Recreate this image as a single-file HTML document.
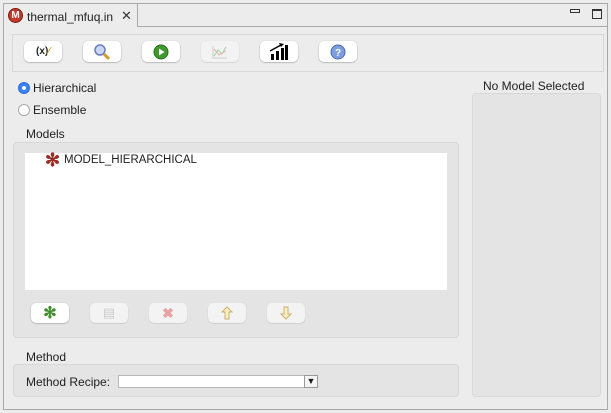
<!DOCTYPE html>
<html><head><meta charset="utf-8">
<style>
*{box-sizing:border-box;margin:0;padding:0}
body{width:611px;height:413px;background:#ececec;font-family:"Liberation Sans",sans-serif;font-size:12px;color:#1e1e1e;position:relative;overflow:hidden}
.a{position:absolute}
.btn{position:absolute;background:#fff;border-radius:5px;box-shadow:0 0.5px 1.5px rgba(0,0,0,.35);display:flex;align-items:center;justify-content:center}
.btn.dis{background:#f3f3f3;box-shadow:0 0.5px 1px rgba(0,0,0,.18)}
</style></head><body>
<div class="a" style="left:3px;top:3px;width:605px;height:407px;border:1px solid #a9a9a9;border-top:none"></div>
<div class="a" style="left:3px;top:3px;width:605px;height:1px;background:#a9a9a9"></div>
<div class="a" style="left:138px;top:26px;width:470px;height:1px;background:#a9a9a9"></div>
<div class="a" style="left:4px;top:4px;width:134px;height:23px;background:#ececec;border-right:1px solid #a9a9a9"></div>
<div class="a" style="left:8px;top:8px;width:15px;height:15px;border-radius:50%;background:#c0392b;border:1px solid #7a1d14;color:#fff;font-weight:bold;font-size:10px;line-height:13px;text-align:center">M</div>
<div class="a" style="left:27px;top:10px;font-size:12px">thermal_mfuq.in</div>
<div class="a" style="left:121px;top:8px;font-size:13px;color:#333">✕</div>
<div class="a" style="left:570px;top:9px;width:10px;height:4px;border:1px solid #333"></div>
<div class="a" style="left:592px;top:9px;width:10px;height:10px;border:1px solid #333;border-top-width:2px"></div>
<div class="a" style="left:12px;top:34px;width:592px;height:38px;border:1px solid #d8d8d8;background:#ececec"></div>
<div class="btn" style="left:24px;top:41px;width:38px;height:21px;font-size:10px;font-weight:bold">(x)<span style="color:#d9a520">⁄</span></div>
<div class="btn" style="left:83px;top:41px;width:38px;height:21px"><svg width="18" height="18"><circle cx="7" cy="7" r="5" fill="#c9d6f5" stroke="#6a7fb8" stroke-width="1.5"/><line x1="11" y1="11" x2="16" y2="16" stroke="#d69a2a" stroke-width="3"/></svg></div>
<div class="btn" style="left:142px;top:41px;width:38px;height:21px"><svg width="16" height="16"><circle cx="8" cy="8" r="7" fill="#3f9a2c" stroke="#2a6e1c"/><path d="M6 4.5L11.5 8L6 11.5Z" fill="#fff"/></svg></div>
<div class="btn dis" style="left:201px;top:41px;width:38px;height:21px"><svg width="16" height="14"><path d="M1 1V13H15" stroke="#ccc" fill="none"/><path d="M2 11L6 5L10 9L14 2" stroke="#9fd0a0" fill="none"/><path d="M2 4L7 10L14 6" stroke="#e6b0b0" fill="none"/></svg></div>
<div class="btn" style="left:260px;top:41px;width:38px;height:21px"><svg width="20" height="17"><rect x="2" y="11" width="3" height="6"/><rect x="7" y="8" width="3" height="9"/><rect x="12" y="5" width="3" height="12"/><rect x="16" y="2" width="3" height="15"/><path d="M1 8L12 2" stroke="#000" stroke-width="1.5"/><path d="M10 0L15 1L12 4Z"/></svg></div>
<div class="btn" style="left:319px;top:41px;width:38px;height:21px"><svg width="16" height="16"><circle cx="8" cy="8" r="7" fill="#7f9fdc" stroke="#4a68b0"/><text x="8" y="12" font-size="10" font-weight="bold" fill="#fff" text-anchor="middle" font-family="Liberation Sans">?</text></svg></div>
<div class="a" style="left:18px;top:82px;width:12px;height:12px;border-radius:50%;background:#3b82f6;border:1px solid #2f6fd8"></div>
<div class="a" style="left:22px;top:86px;width:4px;height:4px;border-radius:50%;background:#fff"></div>
<div class="a" style="left:33px;top:81px;font-size:12px">Hierarchical</div>
<div class="a" style="left:18px;top:104px;width:12px;height:12px;border-radius:50%;background:#fff;border:1px solid #aaa"></div>
<div class="a" style="left:33px;top:103px">Ensemble</div>
<div class="a" style="left:26px;top:127px">Models</div>
<div class="a" style="left:13px;top:142px;width:446px;height:196px;background:#e4e4e4;border:1px solid #d8d8d8;border-radius:4px"></div>
<div class="a" style="left:25px;top:153px;width:422px;height:137px;background:#fff"></div>
<div class="a" style="left:45px;top:151px;font-size:18px;line-height:18px;color:#9b2a24;font-weight:bold">✻</div>
<div class="a" style="left:64px;top:154px;font-size:11.5px">MODEL_HIERARCHICAL</div>
<div class="btn" style="left:31px;top:303px;width:38px;height:20px;color:#3f8f2a;font-size:16px;font-weight:bold">✻</div>
<div class="btn dis" style="left:90px;top:303px;width:38px;height:20px;color:#ccc;font-size:13px">▤</div>
<div class="btn dis" style="left:149px;top:303px;width:38px;height:20px;color:#e8a0a0;font-size:14px;font-weight:bold">✖</div>
<div class="btn dis" style="left:208px;top:303px;width:38px;height:20px"><svg width="12" height="14"><path d="M6 1L11 6H8V13H4V6H1Z" fill="#fbf0c0" stroke="#c9b070"/></svg></div>
<div class="btn dis" style="left:267px;top:303px;width:38px;height:20px"><svg width="12" height="14"><path d="M6 13L11 8H8V1H4V8H1Z" fill="#fbf0c0" stroke="#c9b070"/></svg></div>
<div class="a" style="left:26px;top:350px">Method</div>
<div class="a" style="left:13px;top:364px;width:446px;height:33px;background:#e4e4e4;border:1px solid #d8d8d8;border-radius:4px"></div>
<div class="a" style="left:26px;top:375px">Method Recipe:</div>
<div class="a" style="left:118px;top:375px;width:200px;height:13px;background:#fff;border:1px solid #b8b8b8"></div>
<div class="a" style="left:304px;top:375px;width:14px;height:13px;border:1px solid #999;background:#f5f5f5;font-size:9px;line-height:11px;text-align:center">▼</div>
<div class="a" style="left:483px;top:79px">No Model Selected</div>
<div class="a" style="left:472px;top:93px;width:129px;height:304px;background:#e4e4e4;border:1px solid #d8d8d8;border-radius:4px"></div>
</body></html>
